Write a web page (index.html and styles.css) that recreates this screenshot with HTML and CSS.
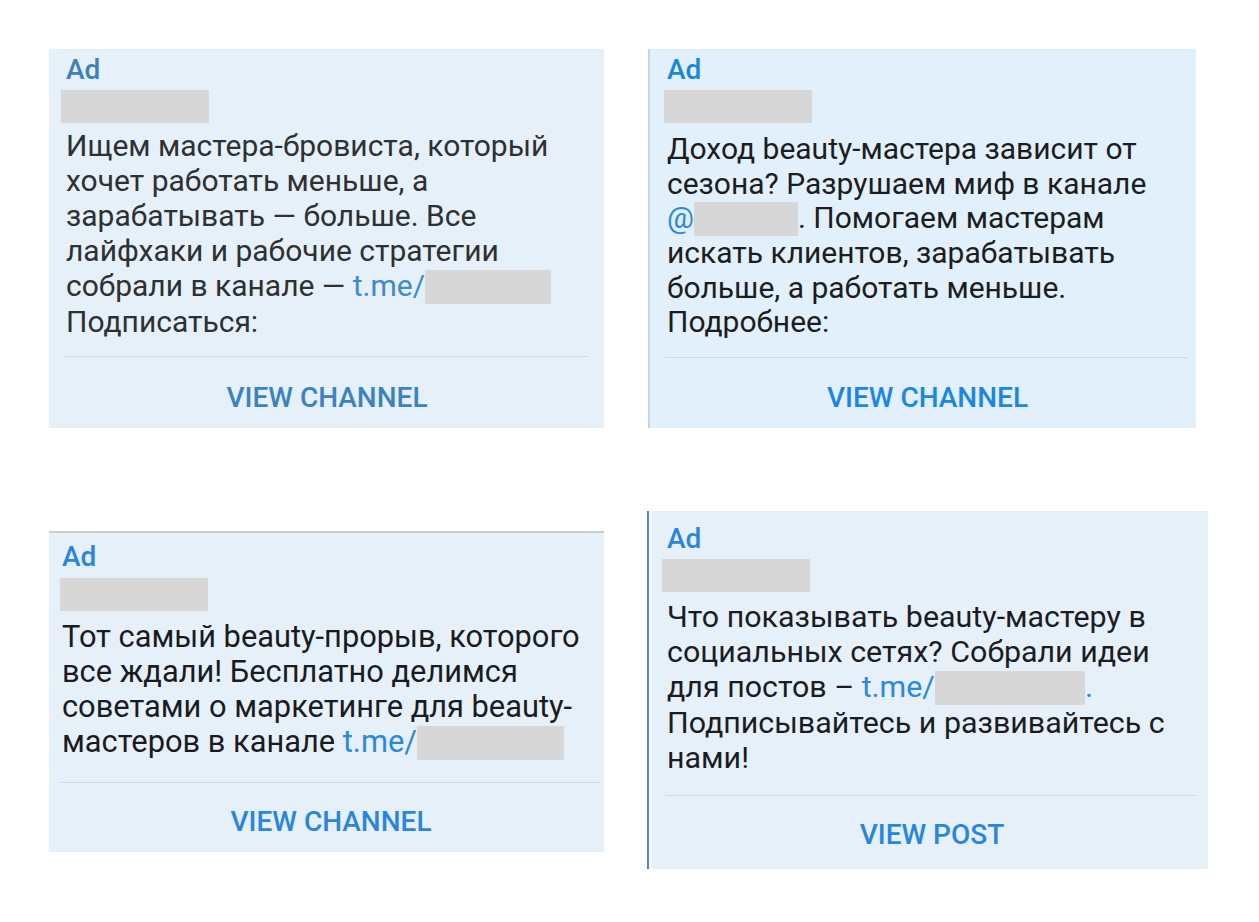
FILE: index.html
```html
<!DOCTYPE html>
<html lang="ru">
<head>
<meta charset="utf-8">
<title>Telegram Ads</title>
<link rel="stylesheet" href="styles.css">
</head>
<body>
<main class="board">
  <div class="row row-top">
    <article class="card card-1">
      <div class="ad">Ad</div>
      <div class="redact name"></div>
      <p class="body">Ищем мастера-бровиста, который<br>хочет работать меньше, а<br>зарабатывать — больше. Все<br>лайфхаки и рабочие стратегии<br>собрали в канале — <span class="link">t.me/</span><span class="redact inline inline-1"></span><br>Подписаться:</p>
      <div class="divider"></div>
      <div class="btn">VIEW CHANNEL</div>
    </article>
    <article class="card card-2">
      <div class="ad">Ad</div>
      <div class="redact name"></div>
      <p class="body">Доход beauty-мастера зависит от<br>сезона? Разрушаем миф в канале<br><span class="link">@</span><span class="redact inline inline-2"></span>. Помогаем мастерам<br>искать клиентов, зарабатывать<br>больше, а работать меньше.<br>Подробнее:</p>
      <div class="divider"></div>
      <div class="btn">VIEW CHANNEL</div>
    </article>
  </div>
  <div class="row row-bottom">
    <article class="card card-3">
      <div class="ad">Ad</div>
      <div class="redact name"></div>
      <p class="body">Тот самый beauty-прорыв, которого<br>все ждали! Бесплатно делимся<br>советами о маркетинге для beauty-<br>мастеров в канале <span class="link">t.me/</span><span class="redact inline inline-3"></span></p>
      <div class="divider"></div>
      <div class="btn">VIEW CHANNEL</div>
    </article>
    <article class="card card-4">
      <div class="ad">Ad</div>
      <div class="redact name"></div>
      <p class="body">Что показывать beauty-мастеру в<br>социальных сетях? Собрали идеи<br>для постов – <span class="link">t.me/</span><span class="redact inline inline-4"></span><span class="link">.</span><br>Подписывайтесь и развивайтесь с<br>нами!</p>
      <div class="divider"></div>
      <div class="btn">VIEW POST</div>
    </article>
  </div>
</main>
</body>
</html>
```
FILE: styles.css
```css
html, body {
  margin: 0;
  padding: 0;
  background: #ffffff;
}

body {
  font-family: Roboto, "Noto Sans", "Liberation Sans", sans-serif;
  color: #222;
}

.board {
  width: 1259px;
  height: 922px;
  overflow: hidden;
}

.row {
  display: flex;
  align-items: flex-start;
  padding-left: 49px;
}

.row-top {
  padding-top: 49px;
}

.row-bottom {
  margin-top: 83px;
}

.card {
  box-sizing: border-box;
  display: flex;
  flex-direction: column;
  background: #e5f0f9;
  padding: 6px 16px 0 17px;
}

.card-1 {
  width: 555px;
  height: 379px;
  background: #e5f0f8;
  color: #2e3032;
}

.card-2 {
  width: 548px;
  height: 379px;
  margin-left: 44px;
  background: #e2f0fb;
  border-left: 2px solid #c3d7e8;
  padding-left: 17px;
  padding-right: 8px;
  color: #1c1d20;
}

.card-3 {
  width: 555px;
  height: 321px;
  margin-top: 20px;
  background: #e6f0f9;
  border-top: 2px solid #c9cdd2;
  padding-left: 13px;
  padding-right: 4px;
  padding-top: 9px;
  color: #1a1b1e;
}

.card-4 {
  width: 561px;
  height: 358px;
  margin-left: 43px;
  background: #e6f0f9;
  border-left: 2px solid #4d88cf;
  box-shadow: inset 3px 0 0 #f3f7fb;
  padding-left: 18px;
  padding-right: 11px;
  padding-top: 13px;
  color: #1b1c1f;
}

.ad {
  font-size: 28px;
  line-height: 30px;
  font-weight: 500;
  color: #2a86dc;
}

.card-1 .ad {
  color: #3e80bc;
}

.card-2 .ad {
  color: #1a87da;
}

.redact {
  background: #d7d7d7;
}

.name {
  width: 148px;
  height: 33px;
  margin: 5px 0 0 -5px;
}

.card-2 .name {
  margin-left: -3px;
}

.card-3 .name {
  margin-left: -2px;
  margin-top: 6px;
}

.card-4 .name {
  margin-left: -5px;
}

.body {
  margin: 5px 0 0 0;
  font-size: 30px;
  line-height: 35px;
  white-space: nowrap;
}

.card-2 .body {
  margin-top: 9px;
  line-height: 34.5px;
}

.card-3 .body {
  margin-top: 8px;
  font-size: 30.8px;
}

.card-4 .body {
  margin-top: 7px;
  font-size: 30.4px;
}

.link {
  color: #2a88de;
}

.card-1 .link {
  color: #3e8acb;
}

.redact.inline {
  display: inline-block;
  height: 34px;
  vertical-align: -8px;
}

.inline-1 {
  width: 126px;
}

.inline-2 {
  width: 104px;
}

.inline-3 {
  width: 147px;
}

.inline-4 {
  width: 150px;
}

.divider {
  height: 1px;
  background: #c6dbed;
  margin: 17px 0 0 -2px;
}

.card-3 .divider {
  margin-top: 22px;
}

.card-4 .divider {
  margin-top: 20px;
}

.btn {
  padding-top: 24px;
  font-size: 28px;
  line-height: 30px;
  font-weight: 500;
  text-align: center;
  color: #2a86dc;
}

.card-1 .btn {
  padding-top: 26px;
  color: #3d82c0;
}

.card-2 .btn {
  padding-top: 25px;
  color: #1b86e3;
}
```
